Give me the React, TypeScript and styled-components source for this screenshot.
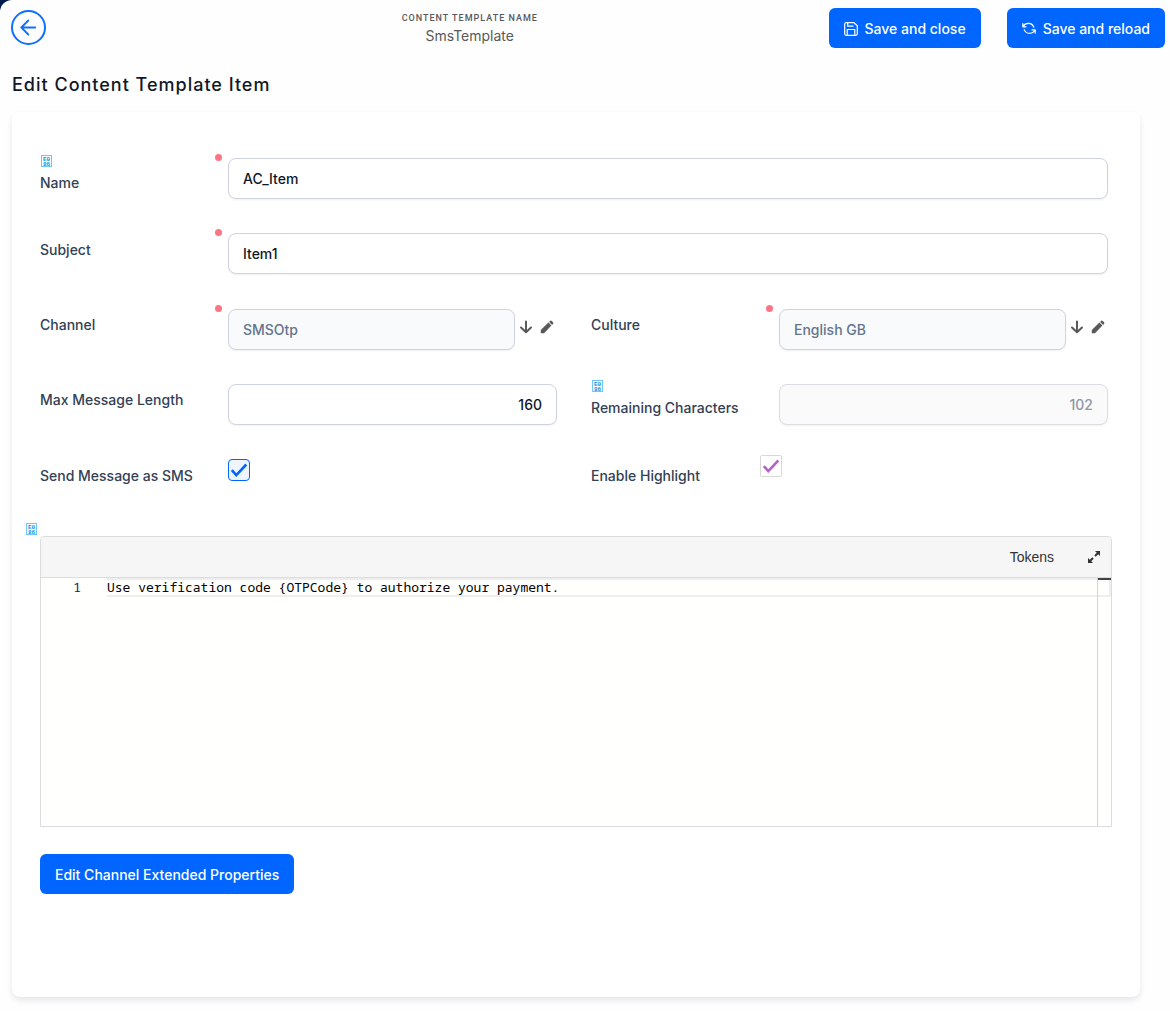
import React, { useState } from "react";
import styled, { createGlobalStyle } from "styled-components";

const GlobalStyle = createGlobalStyle`
  *, *::before, *::after { box-sizing: border-box; }
  html { background: #001a4d; }
  body {
    margin: 0;
    font-family: Inter, "Liberation Sans", sans-serif;
    font-size: 14px;
    line-height: 20px;
    color: #111827;
  }
  button, input, textarea { font: inherit; }
`;

const Page = styled.div`
  min-height: 100vh;
  background: #fefefe;
  border-top-left-radius: 12px;
`;

const Header = styled.header`
  display: grid;
  grid-template-columns: 100px 1fr auto;
  align-items: start;
  padding: 8px 5px 0 11px;
`;

const BackButton = styled.button`
  width: 35px;
  height: 35px;
  margin-top: 2px;
  padding: 0;
  display: grid;
  place-items: center;
  border: 2px solid #0f6fff;
  border-radius: 50%;
  background: transparent;
  color: #0f6fff;
  cursor: pointer;
`;

const TemplateInfo = styled.div`
  align-self: center;
  text-align: center;
  color: #58595b;
`;

const Caption = styled.div`
  font-family: Roboto, sans-serif;
  font-size: 9px;
  font-weight: 500;
  line-height: 16px;
  letter-spacing: 1px;
  text-transform: uppercase;
`;

const TemplateName = styled.div`
  font-size: 14px;
`;

const Actions = styled.div`
  display: flex;
  gap: 26px;
`;

const PrimaryButton = styled.button`
  display: inline-flex;
  align-items: center;
  gap: 7px;
  height: 40px;
  padding: 1px 15px 0;
  border: 0;
  border-radius: 6px;
  background: #0066ff;
  color: #fff;
  font-weight: 500;
  white-space: nowrap;
  cursor: pointer;
`;

const Title = styled.h1`
  margin: 24px 12px 15px;
  font-size: 18px;
  font-weight: 500;
  line-height: 25px;
  letter-spacing: 1px;
`;

const Card = styled.main`
  margin: 0 30px 0 12px;
  padding: 42px 28px 103px;
  background: #fff;
  border-radius: 8px;
  box-shadow: 0 4px 6px rgba(17, 40, 50, 0.08), 0 2px 6px rgba(17, 40, 50, 0.03);
`;

const Form = styled.div`
  display: grid;
  grid-template-columns: 1fr 1fr;
  gap: 30px 34px;
  padding-right: 4px;

  & + & { margin-top: 31px; }
`;

const Field = styled.div<{ $wide?: boolean; $labelWidth?: number }>`
  display: grid;
  grid-template-columns: ${(p) => p.$labelWidth ?? 188}px 1fr;
  align-items: start;
  min-height: 45px;
  grid-column: ${(p) => (p.$wide ? "1 / -1" : "auto")};
`;

const LabelCell = styled.div<{ $hint?: boolean; $compact?: boolean }>`
  display: flex;
  flex-direction: column;
  gap: 6px;
  padding-top: ${(p) => (p.$hint ? (p.$compact ? 0 : 1) : p.$compact ? 10 : 11)}px;
`;

const Label = styled.label`
  color: #334155;
  font-weight: 500;
`;

const Control = styled.div<{ $flush?: boolean }>`
  position: relative;
  display: flex;
  align-items: center;
  padding-top: ${(p) => (p.$flush ? 0 : 4)}px;
`;

const RequiredDot = styled.span`
  position: absolute;
  top: 0;
  left: -13px;
  width: 7px;
  height: 7px;
  border-radius: 50%;
  background: #fd7585;
`;

const Input = styled.input<{ $tone?: "muted" | "disabled"; $numeric?: boolean }>`
  flex: 1;
  min-width: 0;
  height: 41px;
  padding: 0 14px;
  border: 1px solid ${(p) => (p.$tone === "disabled" ? "#dcdde5" : "#cfd3e0")};
  border-radius: 8px;
  outline: 0;
  background: ${(p) => (p.$tone === "muted" ? "#f8fafc" : p.$tone === "disabled" ? "#fafafa" : "#fff")};
  box-shadow: 0 1px 2px rgba(15, 23, 42, 0.06);
  color: ${(p) => (p.$tone === "muted" ? "#64748b" : p.$tone === "disabled" ? "#8f97a5" : "#0f172a")};
  font-weight: 500;
  text-align: ${(p) => (p.$numeric ? "right" : "left")};
`;

const LookupActions = styled.div`
  display: flex;
  gap: 6px;
  width: 42px;
  padding: 0 0 6px 3px;
`;

const IconButton = styled.button`
  display: grid;
  place-items: center;
  width: 15px;
  height: 15px;
  padding: 0;
  border: 0;
  background: none;
  color: #58595b;
  cursor: pointer;
`;

const CheckBox = styled.span<{ $accent: string; $border: string; $fill: string; $radius: number }>`
  display: grid;
  width: 22px;
  height: 22px;
  border: 1px solid ${(p) => p.$border};
  border-radius: ${(p) => p.$radius}px;
  background: ${(p) => p.$fill};
  color: ${(p) => p.$accent};

  > * { grid-area: 1 / 1; }
  input { appearance: none; width: 20px; height: 20px; margin: 0; cursor: pointer; }
  svg { pointer-events: none; visibility: hidden; }
  input:checked + svg { visibility: visible; }
`;

const EditorArea = styled.section`
  position: relative;
  margin-top: 36px;
`;

const EditorBadge = styled.span`
  position: absolute;
  top: -13px;
  left: -15px;
  display: flex;
`;

const EditorFrame = styled.div`
  border: 1px solid #dcdcdc;
  border-radius: 4px 4px 0 0;
  overflow: hidden;
`;

const Toolbar = styled.div`
  display: flex;
  align-items: center;
  justify-content: flex-end;
  gap: 32px;
  height: 41px;
  padding: 0 10px;
  border-bottom: 1px solid #dcdcdc;
  background: #f6f6f6;
`;

const TokensButton = styled.button`
  padding: 0;
  border: 0;
  background: none;
  color: #333;
  font-family: "Liberation Sans", Arial, sans-serif;
  font-size: 14px;
  cursor: pointer;
`;

const CodePane = styled.div`
  display: grid;
  grid-template-columns: 66px 1fr 14px;
  height: 248px;
  background: #fffffe;
  font-family: Consolas, "Noto Sans Mono", "DejaVu Sans Mono", monospace;
  font-size: 13px;
  line-height: 19px;
`;

const Gutter = styled.div`
  padding-right: 26px;
  text-align: right;
  color: #0b216f;
`;

const CodeText = styled.textarea`
  width: 100%;
  height: 100%;
  padding: 0;
  border: 0;
  outline: 0;
  resize: none;
  color: #000;
  background:
    linear-gradient(#eee, #eee) 0 0 / 100% 2px no-repeat,
    linear-gradient(#eee, #eee) 0 17px / 100% 2px no-repeat,
    #fffffe;
`;

const Ruler = styled.div`
  border-left: 1px solid #d4d4d4;
  background:
    linear-gradient(#424242, #424242) 0 0 / 100% 2px no-repeat,
    linear-gradient(#eee, #eee) 0 17px / 100% 2px no-repeat,
    linear-gradient(#eee, #eee) 100% 0 / 2px 19px no-repeat;
`;

const Footer = styled.div`
  padding-top: 27px;
`;

const HintIcon = () => (
  <svg width="13" height="12" viewBox="0 0 13 12" aria-hidden="true">
    <rect x="1.5" y="0.5" width="10" height="11" fill="none" stroke="#6cc9f4" />
    <g fill="#0095e0" fontFamily="Liberation Mono" fontWeight="700" fontSize="6" textAnchor="middle">
      <text x="6.5" y="5.5">E0</text>
      <text x="6.5" y="10.7">86</text>
    </g>
  </svg>
);

const BackIcon = () => (
  <svg width="19" height="19" viewBox="0 0 19 19" fill="none" stroke="currentColor" strokeWidth="1.8" strokeLinecap="round" strokeLinejoin="round">
    <path d="M16.2 9.5H2.8M9.3 2.5L2.3 9.5L9.3 16.5" />
  </svg>
);

const SaveIcon = () => (
  <svg width="14" height="14" viewBox="0 0 14 14" fill="none" stroke="currentColor" strokeWidth="1.2" strokeLinejoin="round">
    <path d="M2.2 .7H10L13.3 3.8V11.8Q13.3 13.3 11.8 13.3H2.2Q.7 13.3 .7 11.8V2.2Q.7 .7 2.2 .7ZM3.7 .9V4.2H9.5M3.2 13V7.5H10.8V13" />
  </svg>
);

const ReloadIcon = () => (
  <svg width="14" height="14" viewBox="0 0 14 14" fill="none" stroke="currentColor" strokeWidth="1.2" strokeLinecap="round" strokeLinejoin="round">
    <path d="M.8 1.5V4.8H4M1 4.6C3.2.4 9.8 .2 11.8 5.2M13.2 11.2V7.9H10M13 8.1C10.8 12.4 4.2 12.6 2.2 7.6" />
  </svg>
);

const DownIcon = () => (
  <svg width="14" height="14" viewBox="0 0 14 14" fill="none" stroke="currentColor" strokeWidth="2" strokeLinecap="round" strokeLinejoin="round">
    <path d="M7 1.5V12M2 7.5L7 12.2L12 7.5" />
  </svg>
);

const PencilIcon = () => (
  <svg width="14" height="14" viewBox="0 0 14 14" fill="currentColor">
    <path d="M.8 13.2V10L8.4 2.6L11.4 5.6L4 13.2ZM9.1 1.9L10.3 .8Q11 .3 11.7 .9L13.1 2.3Q13.7 3 13.1 3.8L12.1 4.9Z" />
  </svg>
);

const CheckIcon = () => (
  <svg width="20" height="20" viewBox="0 0 20 20" fill="none" stroke="currentColor" strokeWidth="2.6">
    <path d="M2.8 10.2L7.3 15.2L17.3 4.5" />
  </svg>
);

const ExpandIcon = () => (
  <svg width="14" height="14" viewBox="0 0 14 14" fill="#333">
    <path d="M8 1H13V6L11.2 4.2L8.7 6.7L7.3 5.3L9.8 2.8ZM6 13H1V8L2.8 9.8L5.3 7.3L6.7 8.7L4.2 11.2Z" />
  </svg>
);

interface TextFieldProps {
  id: string;
  label: string;
  value: string;
  wide?: boolean;
  hint?: boolean;
  required?: boolean;
  lookup?: boolean;
  numeric?: boolean;
  disabled?: boolean;
}

function TextField({ id, label, value, wide, hint, required, lookup, numeric, disabled }: TextFieldProps) {
  const [text, setText] = useState(value);
  return (
    <Field $wide={wide}>
      <LabelCell $hint={hint} $compact={!wide}>
        {hint && <HintIcon />}
        <Label htmlFor={id}>{label}</Label>
      </LabelCell>
      <Control>
        {required && <RequiredDot />}
        <Input
          id={id}
          value={text}
          onChange={(e) => setText(e.target.value)}
          readOnly={lookup}
          disabled={disabled}
          required={required}
          $numeric={numeric}
          $tone={lookup ? "muted" : disabled ? "disabled" : undefined}
        />
        {lookup && (
          <LookupActions>
            <IconButton type="button" aria-label={`Select ${label}`}><DownIcon /></IconButton>
            <IconButton type="button" aria-label={`Edit ${label}`}><PencilIcon /></IconButton>
          </LookupActions>
        )}
      </Control>
    </Field>
  );
}

export default function App() {
  return (
    <>
      <GlobalStyle />
      <Page>
        <Header>
          <BackButton type="button" aria-label="Back"><BackIcon /></BackButton>
          <TemplateInfo>
            <Caption>Content template name</Caption>
            <TemplateName>SmsTemplate</TemplateName>
          </TemplateInfo>
          <Actions>
            <PrimaryButton type="button"><SaveIcon />Save and close</PrimaryButton>
            <PrimaryButton type="button"><ReloadIcon />Save and reload</PrimaryButton>
          </Actions>
        </Header>
        <Title>Edit Content Template Item</Title>
        <Card>
          <Form>
            <TextField id="name" label="Name" value="AC_Item" wide hint required />
            <TextField id="subject" label="Subject" value="Item1" wide required />
          </Form>
          <Form>
            <TextField id="channel" label="Channel" value="SMSOtp" required lookup />
            <TextField id="culture" label="Culture" value="English GB" required lookup />
            <TextField id="max-length" label="Max Message Length" value="160" numeric />
            <TextField id="remaining" label="Remaining Characters" value="102" hint numeric disabled />
            <Field>
              <LabelCell><Label htmlFor="send-sms">Send Message as SMS</Label></LabelCell>
              <Control>
                <CheckBox $accent="#0066ff" $border="#0066ff" $fill="#eff5ff" $radius={4}>
                  <input id="send-sms" type="checkbox" defaultChecked />
                  <CheckIcon />
                </CheckBox>
              </Control>
            </Field>
            <Field $labelWidth={169}>
              <LabelCell><Label htmlFor="highlight">Enable Highlight</Label></LabelCell>
              <Control $flush>
                <CheckBox $accent="#b565c5" $border="#d9d9d9" $fill="#fff" $radius={2}>
                  <input id="highlight" type="checkbox" defaultChecked />
                  <CheckIcon />
                </CheckBox>
              </Control>
            </Field>
          </Form>
          <EditorArea>
            <EditorBadge><HintIcon /></EditorBadge>
            <EditorFrame>
              <Toolbar>
                <TokensButton type="button">Tokens</TokensButton>
                <IconButton type="button" aria-label="Expand editor"><ExpandIcon /></IconButton>
              </Toolbar>
              <CodePane>
                <Gutter>1</Gutter>
                <CodeText
                  aria-label="Message content"
                  spellCheck={false}
                  defaultValue="Use verification code {OTPCode} to authorize your payment."
                />
                <Ruler />
              </CodePane>
            </EditorFrame>
          </EditorArea>
          <Footer>
            <PrimaryButton type="button">Edit Channel Extended Properties</PrimaryButton>
          </Footer>
        </Card>
      </Page>
    </>
  );
}
